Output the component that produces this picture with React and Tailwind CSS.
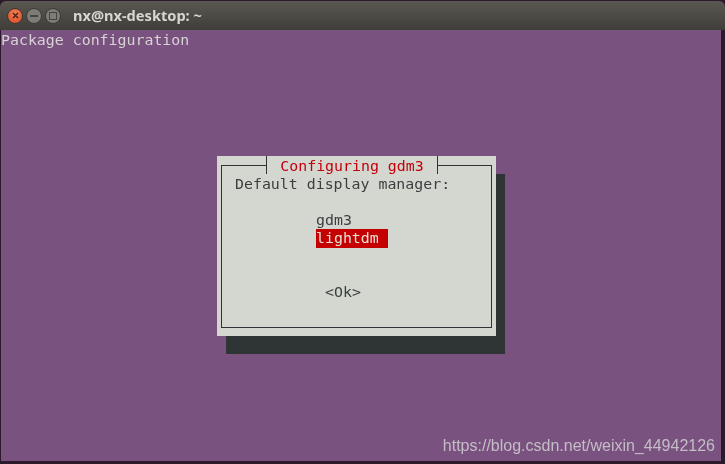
import React from "react";

const MONO = "font-['DejaVu_Sans_Mono',monospace] text-[14.9px] leading-[18px]";

function WindowButton({ className, children }) {
  return (
    <div className={`w-[16px] h-[16px] rounded-full flex items-center justify-center border border-[#3a3a36] ${className}`}>
      {children}
    </div>
  );
}

export default function App() {
  return (
    <div className="w-[725px] h-[464px] bg-[#2c1a2c] overflow-hidden flex flex-col pt-px blur-[0.4px]">
      {/* Title bar */}
      <div className="h-[29px] shrink-0 flex items-center pl-[7px] bg-gradient-to-b from-[#5a5850] to-[#3f3e39] rounded-t-md">
        <div className="flex items-center gap-[3px]">
          <WindowButton className="bg-[radial-gradient(circle_at_50%_35%,#f2835a,#d8441c)]">
            <svg width="9" height="9" viewBox="0 0 9 9">
              <path d="M2 2l5 5M7 2l-5 5" stroke="#4a2412" strokeWidth="1.5" />
            </svg>
          </WindowButton>
          <WindowButton className="bg-[#7e7d75]">
            <div className="w-[8px] h-[2px] bg-[#45453f]" />
          </WindowButton>
          <WindowButton className="bg-[#7e7d75]">
            <div className="w-[8px] h-[8px] border border-[#45453f]" />
          </WindowButton>
        </div>
        <span className="ml-[12px] font-['Noto_Sans',sans-serif] font-bold text-[14.6px] text-[#d8d6cf]">nx@nx-desktop: ~</span>
      </div>

      {/* Terminal */}
      <div className="ml-[1px] mr-[4px] h-[431px] shrink-0 bg-[#7a5280] flex flex-col">
        <div className={`${MONO} text-[#d6d3d4] pt-[1px]`}>Package configuration</div>

        <div className="mt-[107px] ml-[216px] flex justify-start">
          {/* Dialog */}
          <div className="w-[279px] h-[180px] bg-[#d3d7cf] shadow-[9px_18px_0_#2f3535] pt-[9px] px-[4px] pb-[8px] flex">
            <div className="flex-1 border border-[#2e3436] flex flex-col items-start">
              <div className="mt-[-10px] ml-[44px] w-[172px] h-[18px] bg-[#d3d7cf] border-x border-[#2e3436] flex justify-center items-center">
                <span className={`${MONO} text-[#c4000c] pt-[1px]`}>Configuring gdm3</span>
              </div>
              <div className={`${MONO} text-[#3a3f40] ml-[13px] mt-[1px]`}>Default display manager:</div>
              <div className={`${MONO} text-[#3a3f40] ml-[94px] mt-[18px] h-[18px]`}>gdm3</div>
              <div className={`${MONO} ml-[94px] w-[72px] h-[19px] bg-[#c40000] text-[#e6e0d8]`}>lightdm</div>
              <div className={`${MONO} text-[#3a3f40] ml-[103px] mt-[35px]`}>&lt;Ok&gt;</div>
            </div>
          </div>
        </div>

        <div className="mt-auto mb-[6px] mr-[6px] text-right font-['Liberation_Sans',sans-serif] text-[16px] leading-[18px] text-[#c4bdc6]">
          https://blog.csdn.net/weixin_44942126
        </div>
      </div>
    </div>
  );
}
